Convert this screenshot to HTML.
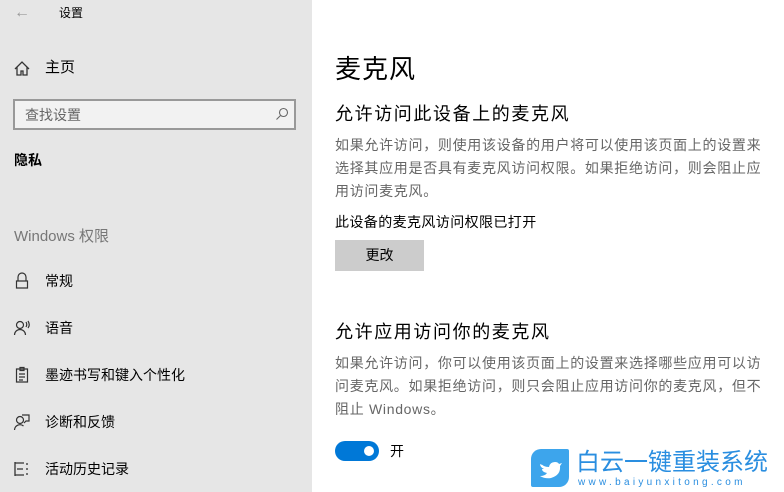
<!DOCTYPE html><html><head><meta charset="utf-8"><style>
*{margin:0;padding:0;box-sizing:border-box}
body{width:784px;height:492px;overflow:hidden;background:#fff;font-family:"Liberation Sans","Noto Sans CJK SC",sans-serif;position:relative;color:#000}
.a{position:absolute;white-space:nowrap}
#side{position:absolute;left:0;top:0;width:312px;height:492px;background:#e6e6e6}
.it{position:absolute;left:45px;font-size:14px;line-height:20px}
.ic{position:absolute;left:13px}
p.g{position:absolute;left:335px;font-size:14px;line-height:23px;color:#666;white-space:nowrap;letter-spacing:0.7px}
</style></head><body>
<div id="side">
<div class="a" style="left:14px;top:4px;font-size:16px;color:#999">←</div>
<div class="a" style="left:59px;top:5px;font-size:12px;line-height:16px">设置</div>
<svg class="ic" style="top:60px" width="18" height="18" viewBox="0 0 18 18" fill="none" stroke="#333" stroke-width="1.3"><path d="M2 9L9 2l7 7M4 7v8h4v-4h2v4h4V7"/></svg>
<div class="it" style="top:58px;font-size:15px">主页</div>
<div class="a" style="left:13px;top:99px;width:283px;height:31px;border:2px solid #999;background:#f2f2f2"></div>
<div class="a" style="left:25px;top:105px;font-size:14px;color:#666">查找设置</div>
<svg class="a" style="left:275px;top:107px" width="14" height="14" viewBox="0 0 14 14" fill="none" stroke="#666" stroke-width="1.1"><circle cx="8.5" cy="5.5" r="4"/><path d="M5.5 8.5L1.5 12.5"/></svg>
<div class="a" style="left:14px;top:150px;font-size:14px;font-weight:bold">隐私</div>
<div class="a" style="left:14px;top:225px;font-size:15px;color:#777">Windows 权限</div>
<svg class="ic" style="top:272px" width="18" height="18" viewBox="0 0 18 18" fill="none" stroke="#333" stroke-width="1.2"><path d="M5 9V5a4 4 0 0 1 8 0v4M3.5 9h11v7h-11z"/></svg>
<div class="it" style="top:271px">常规</div>
<svg class="ic" style="top:319px" width="18" height="18" viewBox="0 0 18 18" fill="none" stroke="#333" stroke-width="1.2"><circle cx="7" cy="6" r="3.5"/><path d="M1.5 16a5.5 5.5 0 0 1 11 0M13 3q1.5 2.5 0 5M15 2q2.5 4 0 7"/></svg>
<div class="it" style="top:318px">语音</div>
<svg class="ic" style="top:366px" width="18" height="18" viewBox="0 0 18 18" fill="none" stroke="#333" stroke-width="1.2"><path d="M3.5 3h11v13h-11zM7 1.5h4v3H7zM6 8h6M6 11h6M6 14h4"/></svg>
<div class="it" style="top:365px">墨迹书写和键入个性化</div>
<svg class="ic" style="top:413px" width="18" height="18" viewBox="0 0 18 18" fill="none" stroke="#333" stroke-width="1.2"><circle cx="7" cy="7" r="3.5"/><path d="M1.5 17a5.5 5.5 0 0 1 9 -4M9 2h7v6h-3l-2 2"/></svg>
<div class="it" style="top:412px">诊断和反馈</div>
<svg class="ic" style="top:460px" width="18" height="18" viewBox="0 0 18 18" fill="none" stroke="#333" stroke-width="1.3"><path d="M2 2v14M2 3h9M2 15h9M4 9h6M14 3v2M14 8v2M14 13v2"/></svg>
<div class="it" style="top:459px">活动历史记录</div>
</div>
<div class="a" style="left:335px;top:52px;font-size:26px;line-height:34px;letter-spacing:1px">麦克风</div>
<div class="a" style="left:335px;top:102px;font-size:18px;line-height:24px;letter-spacing:1.6px">允许访问此设备上的麦克风</div>
<p class="g" style="top:134px">如果允许访问，则使用该设备的用户将可以使用该页面上的设置来<br>选择其应用是否具有麦克风访问权限。如果拒绝访问，则会阻止应<br>用访问麦克风。</p>
<div class="a" style="left:335px;top:212px;font-size:14px;line-height:20px;letter-spacing:0.4px">此设备的麦克风访问权限已打开</div>
<div class="a" style="left:335px;top:240px;width:89px;height:31px;background:#ccc;font-size:14px;line-height:31px;text-align:center">更改</div>
<div class="a" style="left:335px;top:320px;font-size:18px;line-height:24px;letter-spacing:1.6px">允许应用访问你的麦克风</div>
<p class="g" style="top:352px">如果允许访问，你可以使用该页面上的设置来选择哪些应用可以访<br>问麦克风。如果拒绝访问，则只会阻止应用访问你的麦克风，但不<br>阻止 Windows。</p>
<div class="a" style="left:335px;top:441px;width:44px;height:20px;border-radius:10px;background:#0078d7"></div>
<div class="a" style="left:364px;top:446px;width:10px;height:10px;border-radius:5px;background:#fff"></div>
<div class="a" style="left:390px;top:441px;font-size:14px;line-height:20px">开</div>
<div class="a" style="left:531px;top:449px;width:38px;height:38px;border-radius:10px 2px 10px 2px;background:#3da5ec"></div>
<svg class="a" style="left:537px;top:456px" width="26" height="24" viewBox="0 0 26 24" fill="#fff"><path d="M2 6q4 5 10 5q1-5 6-5q3 0 4 2l3-1-2 3q1 9-9 12q-6 1-11-2q5 0 7-3q-5-1-5-4l2 0q-4-2-4-5l2 1q-3-3-3-3z"/></svg>
<div class="a" style="left:576px;top:449px;font-size:24px;line-height:28px;color:#2a8ee0">白云一键重装系统</div>
<div class="a" style="left:578px;top:477px;font-size:10px;line-height:12px;color:#2a8ee0;letter-spacing:3.3px">www.baiyunxitong.com</div>
</body></html>
